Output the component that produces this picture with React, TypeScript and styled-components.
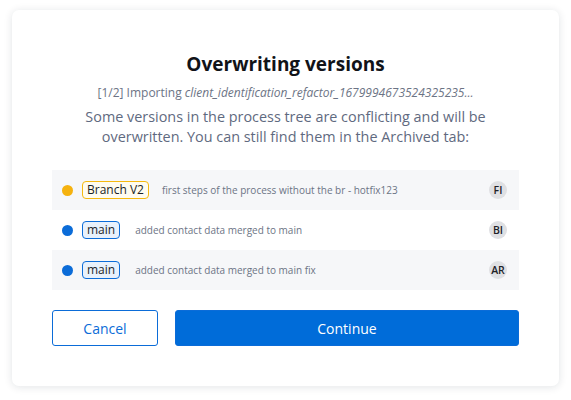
import React from "react";
import styled, { createGlobalStyle } from "styled-components";

const Global = createGlobalStyle`
  body {
    margin: 0;
    background: #ffffff;
    font-family: "Open Sans", "Noto Sans", sans-serif;
  }
`;

const Page = styled.div`
  width: 571px;
  height: 400px;
  padding: 10px 12px 14px;
  box-sizing: border-box;
`;

const Card = styled.div`
  height: 376px;
  box-sizing: border-box;
  background: #fff;
  border-radius: 7px;
  box-shadow: 0 1px 8px rgba(20, 30, 50, 0.12);
  padding: 42px 40px 0;
  display: flex;
  flex-direction: column;
  align-items: stretch;
`;

const Title = styled.h2`
  margin: 0;
  text-align: center;
  font-size: 19px;
  font-weight: 700;
  color: #111318;
  line-height: 25px;
`;

const Sub = styled.div`
  margin-top: 7px;
  text-align: center;
  font-size: 12px;
  color: #6c7485;
  line-height: 18px;
  em {
    font-style: italic;
  }
`;

const Desc = styled.p`
  margin: 5px auto 0;
  width: 450px;
  text-align: center;
  font-size: 14.4px;
  line-height: 20px;
  color: #5f6a80;
`;

const List = styled.div`
  margin-top: 23px;
  display: flex;
  flex-direction: column;
`;

const Row = styled.div<{ $shaded: boolean }>`
  height: 40px;
  display: flex;
  align-items: center;
  padding: 0 12px 0 10px;
  background: ${(p) => (p.$shaded ? "#f6f7f9" : "#fff")};
`;

const Dot = styled.span<{ $color: string }>`
  width: 11px;
  height: 11px;
  border-radius: 50%;
  background: ${(p) => p.$color};
  flex: none;
`;

const Badge = styled.span<{ $kind: "branch" | "main" }>`
  margin-left: 9px;
  padding: 0 4px;
  height: 18px;
  line-height: 16px;
  box-sizing: border-box;
  border-radius: 4px;
  font-size: 12px;
  color: #1b1f27;
  border: 1px solid ${(p) => (p.$kind === "branch" ? "#f5b90f" : "#0b6cd8")};
  background: ${(p) => (p.$kind === "branch" ? "#fffcf0" : "#e8f1fc")};
`;

const Note = styled.span<{ $gap: number }>`
  margin-left: ${(p) => p.$gap}px;
  font-size: 10px;
  color: #6c7485;
  flex: 1;
`;

const Avatar = styled.span`
  width: 18px;
  height: 18px;
  border-radius: 50%;
  background: #dfe0e3;
  color: #202228;
  font-size: 10.5px;
  font-weight: 600;
  display: flex;
  align-items: center;
  justify-content: center;
  flex: none;
`;

const Actions = styled.div`
  margin-top: 20px;
  display: flex;
  gap: 17px;
`;

const Button = styled.button<{ $primary?: boolean }>`
  height: 36px;
  border-radius: 3px;
  font-family: inherit;
  font-size: 14px;
  font-weight: 500;
  cursor: pointer;
  border: 1px solid #0b6cd8;
  color: ${(p) => (p.$primary ? "#fff" : "#0b6cd8")};
  background: ${(p) => (p.$primary ? "#006cd9" : "#fff")};
  width: ${(p) => (p.$primary ? "auto" : "106px")};
  flex: ${(p) => (p.$primary ? 1 : "none")};
`;

const rows = [
  { color: "#f5b20f", kind: "branch" as const, name: "Branch V2", note: "first steps of the process without the br - hotfix123", who: "FI", gap: 13 },
  { color: "#0b6cd8", kind: "main" as const, name: "main", note: "added contact data merged to main", who: "BI", gap: 15 },
  { color: "#0b6cd8", kind: "main" as const, name: "main", note: "added contact data merged to main fix", who: "AR", gap: 15 },
];

export default function App() {
  return (
    <Page>
      <Global />
      <Card>
        <Title>Overwriting versions</Title>
        <Sub>
          [1/2] Importing <em>client_identification_refactor_1679994673524325235...</em>
        </Sub>
        <Desc>
          Some versions in the process tree are conflicting and will be overwritten. You can still find them in the Archived tab:
        </Desc>
        <List>
          {rows.map((r, i) => (
            <Row key={i} $shaded={i !== 1}>
              <Dot $color={r.color} />
              <Badge $kind={r.kind}>{r.name}</Badge>
              <Note $gap={r.gap}>{r.note}</Note>
              <Avatar>{r.who}</Avatar>
            </Row>
          ))}
        </List>
        <Actions>
          <Button>Cancel</Button>
          <Button $primary>Continue</Button>
        </Actions>
      </Card>
    </Page>
  );
}
